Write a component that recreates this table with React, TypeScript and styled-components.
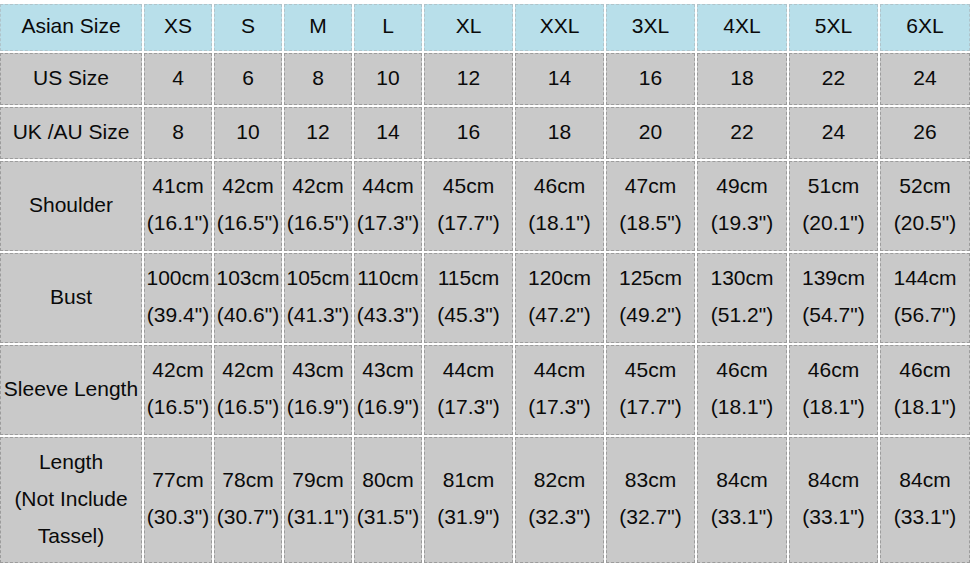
import React from "react";
import styled, { createGlobalStyle } from "styled-components";

const Global = createGlobalStyle`
  html, body { margin: 0; padding: 0; background: #ffffff; }
  body { font-family: Arial, "Liberation Sans", sans-serif; }
`;

const Page = styled.div`
  padding: 4px 0 0 0;
  width: 973px;
  height: 563px;
  overflow: hidden;
`;

const Table = styled.div`
  display: grid;
  grid-template-columns: 142px 68px 68px 68px 68px 89px 89px 89px 90px 89px 90px;
  grid-template-rows: 47px 52px 52px 90px 90px 90px 126px;
  column-gap: 2px;
  row-gap: 2px;
`;

const Cell = styled.div<{ $header?: boolean }>`
  box-sizing: border-box;
  display: flex;
  flex-direction: column;
  align-items: center;
  justify-content: center;
  padding-bottom: 4px;
  background: ${(p) => (p.$header ? "#b8dfea" : "#c9c9c9")};
  border: 1px dashed ${(p) => (p.$header ? "#b0c4cb" : "#9c9c9c")};
  color: #0a0a0a;
  font-family: Arial, "Liberation Sans", sans-serif;
  font-size: 21px;
  line-height: 37px;
  white-space: nowrap;
  text-align: center;
`;

const Line = styled.span`
  display: block;
`;

const sizes = ["XS", "S", "M", "L", "XL", "XXL", "3XL", "4XL", "5XL", "6XL"];

type Row = { label: string[]; values: string[][] };

const pair = (cm: number[], inch: string[]) =>
  cm.map((c, i) => [`${c}cm`, `(${inch[i]}")`]);

const rows: Row[] = [
  { label: ["US Size"], values: ["4", "6", "8", "10", "12", "14", "16", "18", "22", "24"].map((v) => [v]) },
  { label: ["UK /AU Size"], values: ["8", "10", "12", "14", "16", "18", "20", "22", "24", "26"].map((v) => [v]) },
  {
    label: ["Shoulder"],
    values: pair(
      [41, 42, 42, 44, 45, 46, 47, 49, 51, 52],
      ["16.1", "16.5", "16.5", "17.3", "17.7", "18.1", "18.5", "19.3", "20.1", "20.5"]
    ),
  },
  {
    label: ["Bust"],
    values: pair(
      [100, 103, 105, 110, 115, 120, 125, 130, 139, 144],
      ["39.4", "40.6", "41.3", "43.3", "45.3", "47.2", "49.2", "51.2", "54.7", "56.7"]
    ),
  },
  {
    label: ["Sleeve Length"],
    values: pair(
      [42, 42, 43, 43, 44, 44, 45, 46, 46, 46],
      ["16.5", "16.5", "16.9", "16.9", "17.3", "17.3", "17.7", "18.1", "18.1", "18.1"]
    ),
  },
  {
    label: ["Length", "(Not Include", "Tassel)"],
    values: pair(
      [77, 78, 79, 80, 81, 82, 83, 84, 84, 84],
      ["30.3", "30.7", "31.1", "31.5", "31.9", "32.3", "32.7", "33.1", "33.1", "33.1"]
    ),
  },
];

export default function App() {
  return (
    <>
      <Global />
      <Page>
        <Table>
          <Cell $header>Asian Size</Cell>
          {sizes.map((s) => (
            <Cell $header key={s}>
              {s}
            </Cell>
          ))}
          {rows.map((r, ri) => (
            <React.Fragment key={ri}>
              <Cell>
                {r.label.map((l, i) => (
                  <Line key={i}>{l}</Line>
                ))}
              </Cell>
              {r.values.map((v, vi) => (
                <Cell key={vi}>
                  {v.map((l, i) => (
                    <Line key={i}>{l}</Line>
                  ))}
                </Cell>
              ))}
            </React.Fragment>
          ))}
        </Table>
      </Page>
    </>
  );
}
